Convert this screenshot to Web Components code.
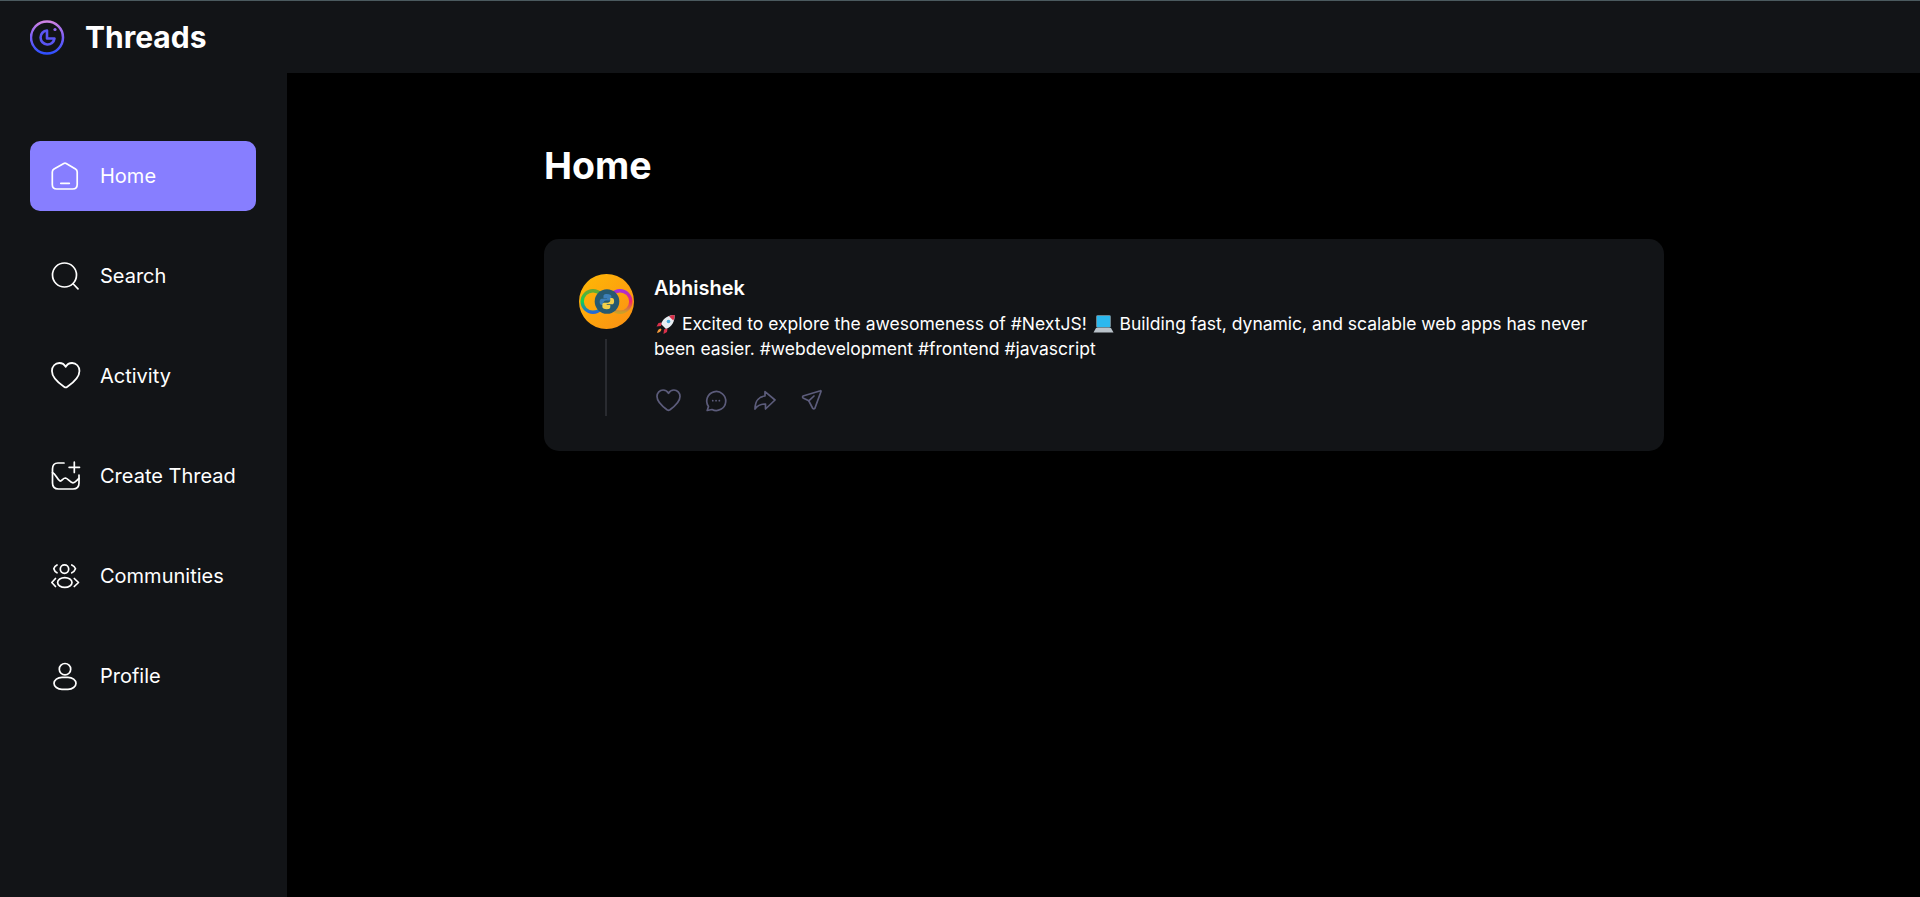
<!DOCTYPE html>
<html lang="en"><head><meta charset="utf-8"><title>Threads</title>
<style>
html,body{margin:0;padding:0;height:100%;background:#000;overflow:hidden}
body{font-family:Inter,"Liberation Sans",sans-serif;color:#fff}
</style></head><body>
<app-shell>
  <top-bar slot="top"></top-bar>
  <side-bar slot="side">
    <nav-item active label="Home" icon="home"></nav-item>
    <nav-item label="Search" icon="search"></nav-item>
    <nav-item label="Activity" icon="heart"></nav-item>
    <nav-item label="Create Thread" icon="create"></nav-item>
    <nav-item label="Communities" icon="community"></nav-item>
    <nav-item label="Profile" icon="profile"></nav-item>
  </side-bar>
  <home-page>
    <thread-card name="Abhishek"></thread-card>
  </home-page>
</app-shell>
<script>
const ICONS={
home:'<path d="M13.800 2.400Q15 1.800 16.200 2.400L25.500 8Q27.200 9 27.200 11V23.500Q27.200 28 22.700 28H6.800Q2.300 28 2.300 23.500V11Q2.300 9 4 8Z"/><path d="M10.800 22.300H19.300"/>',
search:'<circle cx="14.500" cy="14" r="12"/><path d="M23.300 23L28 27.800"/>',
heart:'<path transform="translate(1 .2) scale(1.05)" d="M14 25C13.500 25 13 24.700 12.400 24.300 6 19.900 .9 15.500 .9 9.300 .9 4.900 4 1.700 7.900 1.700 10.600 1.700 12.800 3.100 14 5.400 15.200 3.100 17.400 1.700 20.100 1.700 24 1.700 27.100 4.900 27.100 9.300 27.100 15.500 22 19.900 15.600 24.300 15 24.700 14.500 25 14 25Z"/>',
create:'<path d="M14 2H8Q2.500 2 2.500 8V22Q2.500 28 8.500 28H23Q29 28 29 22V14"/><path d="M24.300 1.200V11.500M19.100 6.300H29.500"/><path d="M2.500 11.500C6 13 7 18.500 10 20C12 20.500 13 16.800 15.500 17C18 17.500 20 21.800 23 21.800C25 21.800 26.500 19.500 29 17.500"/>',
community:'<circle cx="14.500" cy="8.100" r="4.200"/><ellipse cx="14.800" cy="21.500" rx="7.200" ry="4.900"/><path d="M7 4Q4.500 5.200 3.800 7.800Q4.500 10.500 7 11.800M21.800 4Q24.500 5.200 25.500 7.800Q24.500 10.500 21.800 11.800M5.500 17.500L1.800 21.500L5.500 25.500M24.300 17.500L28.500 21.500L24.300 25.500"/>',
profile:'<circle cx="15" cy="8.200" r="5.700"/><rect x="4" y="16.300" width="22" height="12" rx="8" ry="6"/>'
};
function def(name,html,cls){
  const t=document.createElement('template');t.innerHTML=html;
  customElements.define(name,class extends HTMLElement{
    constructor(){super();this.attachShadow({mode:'open'}).appendChild(t.content.cloneNode(true));}
    connectedCallback(){cls&&cls.call(this);}
  });
}
def('app-shell',`<style>
:host{display:grid;grid-template-columns:287px 1fr;grid-template-rows:73px 1fr;height:897px;background:#000}
.top{grid-column:1/3}
.side{display:block}
main{display:block;min-width:0}
</style>
<div class="top"><slot name="top"></slot></div>
<div class="side"><slot name="side"></slot></div>
<main><slot></slot></main>`);
def('top-bar',`<style>
:host{display:flex;align-items:center;gap:20px;height:73px;box-sizing:border-box;background:#121417;border-top:1px solid #4b5a5f;padding:0 0 0 30px}
svg{display:block;width:35px;height:35px;flex:none}
span{font:700 30px/42px Inter,sans-serif;color:#fff}
</style>
<svg viewBox="0 0 35 35" fill="none"><defs><linearGradient id="g" x1="0" y1="0" x2="0" y2="1"><stop offset="0" stop-color="#d083e4"/><stop offset=".45" stop-color="#7f5ff6"/><stop offset="1" stop-color="#2f50ff"/></linearGradient></defs>
<circle cx="17" cy="17.500" r="16" stroke="url(#g)" stroke-width="2.500"/>
<path d="M17 10.500A7 7 0 1 0 24.500 18.500H17Z" stroke="#5a55f2" stroke-width="2.600" stroke-linejoin="round"/>
<circle cx="25" cy="9.500" r="1.600" fill="#9063ee"/></svg>
<span>Threads</span>`);
def('side-bar',`<style>
:host{display:flex;flex-direction:column;gap:30px;box-sizing:border-box;width:287px;height:824px;background:#121417;padding:68px 31px 0 30px}
</style><slot></slot>`);
def('nav-item',`<style>
:host{display:flex;align-items:center;gap:20px;height:70px;box-sizing:border-box;padding:0 20px;border-radius:10px;font:400 20px/28px Inter,sans-serif;color:#fff}
:host([active]){background:#877eff}
svg{display:block;width:30px;height:30px;flex:none;fill:none;stroke:#fff;stroke-width:1.700;stroke-linecap:round;stroke-linejoin:round;overflow:visible}
</style><svg viewBox="0 0 30 30"></svg><span></span>`,function(){
  this.shadowRoot.querySelector('svg').innerHTML=ICONS[this.getAttribute('icon')];
  this.shadowRoot.querySelector('span').textContent=this.getAttribute('label');
});
def('home-page',`<style>
:host{display:block;padding:67px 256px 0 257px}
h1{margin:0 0 46.500px;font:700 37.500px/52.500px Inter,sans-serif;color:#fff;text-align:left}
</style><h1>Home</h1><slot></slot>`);
def('user-avatar',`<style>
:host{display:block;width:55px;height:55px;flex:none}
svg{display:block;width:55px;height:55px}
</style>
<svg viewBox="0 0 55 55"><defs>
<linearGradient id="o" x1="0" y1="0" x2="1" y2="1"><stop offset="0" stop-color="#ffb905"/><stop offset="1" stop-color="#fb8f14"/></linearGradient>
<linearGradient id="a" x1="0" y1="0" x2="0" y2="1"><stop offset="0" stop-color="#6aa832"/><stop offset=".5" stop-color="#12cf55"/><stop offset="1" stop-color="#2468d8"/></linearGradient>
<linearGradient id="b" x1="0" y1="0" x2="0" y2="1"><stop offset="0" stop-color="#a82fd8"/><stop offset=".5" stop-color="#f0286a"/><stop offset="1" stop-color="#c9a02a"/></linearGradient></defs>
<circle cx="27.500" cy="27.500" r="27.500" fill="url(#o)"/>
<circle cx="14" cy="27.500" r="10.800" fill="none" stroke="url(#a)" stroke-width="3.400"/>
<circle cx="41" cy="27.500" r="10.800" fill="none" stroke="url(#b)" stroke-width="3.400"/>
<circle cx="28" cy="27.500" r="12.300" fill="#27596f"/>
<g transform="translate(4.500 4.200) scale(.85)">
<path d="M27.300 18.500c-3.500 0-3.800 1.500-3.800 2.800v2.200h4.200v.8h-6c-2 0-2.700 1.600-2.700 3.700s.9 3.600 2.600 3.600h1.900v-2.500c0-1.800 1.400-3 3-3h4c1.400 0 2.300-1 2.300-2.300v-2.500c0-1.500-1.600-2.800-5.500-2.800z" fill="#3d7fb8"/>
<path d="M27.700 36.500c3.500 0 3.800-1.500 3.800-2.800v-2.200h-4.200v-.8h6c2 0 2.700-1.600 2.700-3.700s-.9-3.600-2.600-3.600h-1.900v2.500c0 1.800-1.400 3-3 3h-4c-1.400 0-2.300 1-2.300 2.300v2.500c0 1.500 1.600 2.800 5.500 2.800z" fill="#f3cf4a"/></g>
</svg>`);
def('thread-card',`<style>
:host{display:flex;gap:20px;box-sizing:border-box;width:1120px;padding:35px;background:#121417;border-radius:15px;color:#fff}
.left{display:flex;flex-direction:column;align-items:center;width:55px;flex:none}
.line{width:2px;flex:1;margin:10px 2px 0 0;background:#292b30}
.body{flex:1;min-width:0}
.name{font:600 20px/28px Inter,sans-serif;margin:0}
p{margin:10px 0 0;font:400 17.500px/24.500px Inter,sans-serif;color:#fff}
.emo{display:inline-block;width:23px;height:20px;vertical-align:-4px}
.acts{display:flex;gap:18px;margin:24px 0 1px;align-items:center}
.acts svg{display:block;width:30px;height:30px;fill:none;stroke:#5c5c7b;stroke-width:1.700;stroke-linecap:round;stroke-linejoin:round}
</style>
<div class="left"><user-avatar></user-avatar><div class="line"></div></div>
<div class="body">
<div class="name"></div>
<p><svg class="emo" viewBox="-2 0 23 20" aria-hidden="true"><path d="M18.500 1C13 1 7 4 5 10l5 5c6-2 9-8 8.500-14Z" fill="#e8eef2"/><path d="M18.500 1c-2 0-3.800.4-5.500 1.200L17.300 6.500C18.200 4.800 18.600 3 18.500 1Z" fill="#d9304a"/><circle cx="12.500" cy="7.500" r="1.800" fill="#4aa8d8"/><path d="M5.500 8.500 2.500 9 .5 12.500l4.500-.5ZM11.500 14.500l-.5 3.500L7.500 20l.5-4.500Z" fill="#d9304a"/><path d="M4.500 14.500c-1.500.3-3 1.800-3.500 4.500 2.700-.5 4.200-2 4.500-3.500Z" fill="#f39a3c"/></svg> <span>Excited to explore the awesomeness of #NextJS!</span> <svg class="emo" viewBox="-2 0 23 20" aria-hidden="true"><rect x="2.500" y="1.500" width="14" height="12" rx="1" fill="#2bb8ee" stroke="#7e8b93" stroke-width=".8"/><path d="M2 14h15L19.500 18.500H-.5Z" fill="#b9c2c9"/></svg> <span>Building fast, dynamic, and scalable web apps has never</span> <span>been easier. #webdevelopment #frontend #javascript</span></p>
<div class="acts">
<svg viewBox="0 0 30 30"><path transform="translate(1.500 2.300)" d="M13 23C12.500 23 12 22.700 11.500 22.400 6 18.500 1.500 14.700 1.500 9.300 1.500 5.500 4.200 2.700 7.600 2.700 9.900 2.700 11.900 4 13 6 14.100 4 16.100 2.700 18.400 2.700 21.800 2.700 24.500 5.500 24.500 9.300 24.500 14.700 20 18.500 14.500 22.400 14 22.700 13.500 23 13 23Z"/></svg>
<svg viewBox="0 0 30 30"><path d="M5.200 25.500L6.500 21.500A9.500 9.500 0 1 1 10 24.500Z"/><path d="M10.700 15.700h.1M14 15.700h.1M17.300 15.700h.1"/></svg>
<svg viewBox="0 0 30 30"><path d="M15 6.700L25 15L15.500 24V19C11 18.800 8 20 5 24C5 15.500 9.500 11.500 15 11Z"/></svg>
<svg viewBox="0 0 30 30"><path d="M22.500 5.800L5 11Q4 12 5 13L10.800 15.800L14.800 23.500Q15.800 24.500 16.800 23.500L23 6.500Q23 5.500 22.500 5.800Z"/><path d="M10.800 15.800L16 11"/></svg>
</div>
</div>`,function(){this.shadowRoot.querySelector('.name').textContent=this.getAttribute('name');});
</script>
</body></html>
